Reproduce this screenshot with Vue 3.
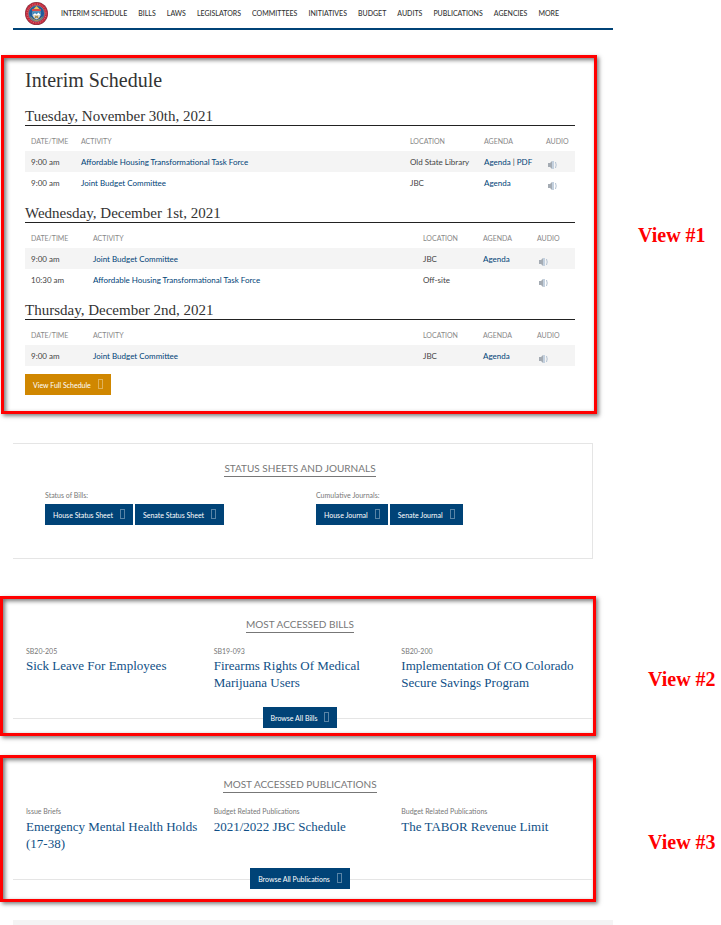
<script setup>
const navItems = [
	'Interim Schedule', 'Bills', 'Laws', 'Legislators', 'Committees', 'Initiatives',
	'Budget', 'Audits', 'Publications', 'Agencies', 'More',
];

const TASK_FORCE = 'Affordable Housing Transformational Task Force';
const JBC = 'Joint Budget Committee';

// wide: the agenda column has to hold both the agenda and the PDF link
const days = [
	{
		title: 'Tuesday, November 30th, 2021',
		wide: true,
		rows: [
			{ time: '9:00 am', activity: TASK_FORCE, location: 'Old State Library', agenda: true, pdf: true },
			{ time: '9:00 am', activity: JBC, location: 'JBC', agenda: true },
		],
	},
	{
		title: 'Wednesday, December 1st, 2021',
		rows: [
			{ time: '9:00 am', activity: JBC, location: 'JBC', agenda: true },
			{ time: '10:30 am', activity: TASK_FORCE, location: 'Off-site' },
		],
	},
	{
		title: 'Thursday, December 2nd, 2021',
		rows: [{ time: '9:00 am', activity: JBC, location: 'JBC', agenda: true }],
	},
];

const statusGroups = [
	{ label: 'Status of Bills:', links: ['House Status Sheet', 'Senate Status Sheet'] },
	{ label: 'Cumulative Journals:', links: ['House Journal', 'Senate Journal'] },
];

const listViews = [
	{
		id: 2,
		title: 'Most Accessed Bills',
		browse: 'Browse All Bills',
		items: [
			{ kind: 'SB20-205', name: 'Sick Leave For Employees' },
			{ kind: 'SB19-093', name: 'Firearms Rights Of Medical Marijuana Users' },
			{ kind: 'SB20-200', name: 'Implementation Of CO Colorado Secure Savings Program' },
		],
	},
	{
		id: 3,
		title: 'Most Accessed Publications',
		browse: 'Browse All Publications',
		items: [
			{ kind: 'Issue Briefs', name: 'Emergency Mental Health Holds (17-38)' },
			{ kind: 'Budget Related Publications', name: '2021/2022 JBC Schedule' },
			{ kind: 'Budget Related Publications', name: 'The TABOR Revenue Limit' },
		],
	},
];
</script>

<template>
	<div class="page">
		<header class="site-header">
			<a href="#" class="seal" aria-label="Home">
				<svg viewBox="0 0 46 46" width="23" height="23">
					<circle cx="23" cy="23" r="23" fill="#7b3b46" />
					<circle cx="23" cy="23" r="19" fill="none" stroke="#c4283c" stroke-width="6" />
					<circle cx="23" cy="23" r="19" fill="none" stroke="#d98a8a" stroke-width="2" stroke-dasharray="2 3" />
					<circle cx="23" cy="23" r="16" fill="#1f5c9c" stroke="#b9a58f" />
					<path d="M23 8l6 6H17z" fill="#e9c65a" />
					<path d="M14 14h18v4H14z" fill="#d94a4a" />
					<path d="M15 19h16v8q-2 6-8 8-6-2-8-8z" fill="#d9d6c8" />
					<path d="M15 19h16v6H15z" fill="#4388bd" />
					<path d="M16 26l4-4 3 3 4-4 4 5z" fill="#fff" />
					<path d="M19 32l7-4M20 28l7 4" stroke="#a88639" stroke-width="2" />
					<path d="M11 30q5 7 12 7t12-7" fill="none" stroke="#d6a646" stroke-width="2" />
				</svg>
			</a>
			<nav>
				<a v-for="item in navItems" :key="item" href="#">{{ item }}</a>
			</nav>
		</header>

		<section class="view view-1">
			<div class="frame schedule">
				<h1>Interim Schedule</h1>
				<template v-for="day in days" :key="day.title">
					<h2>{{ day.title }}</h2>
					<table :class="{ wide: day.wide }">
						<thead>
							<tr>
								<th class="time">Date/Time</th>
								<th>Activity</th>
								<th class="location">Location</th>
								<th class="agenda">Agenda</th>
								<th class="audio">Audio</th>
							</tr>
						</thead>
						<tbody>
							<tr v-for="(row, i) in day.rows" :key="i">
								<td>{{ row.time }}</td>
								<td><a href="#">{{ row.activity }}</a></td>
								<td>{{ row.location }}</td>
								<td>
									<a v-if="row.agenda" href="#">Agenda</a>
									<template v-if="row.pdf"> | <a href="#">PDF</a></template>
								</td>
								<td class="speaker">
									<svg viewBox="0 0 9 8" width="9" height="8">
										<path d="M0 2h2l2-2v8L2 6H0z" fill="#a4abb3" />
										<path d="M4 0h2v8H4z" fill="#c3d0de" />
										<path d="M7.5 1q1.4 3 0 6" fill="none" stroke="#b3c1d0" />
									</svg>
								</td>
							</tr>
						</tbody>
					</table>
				</template>
				<a href="#" class="button gold">View Full Schedule<i class="glyph"></i></a>
			</div>
			<p class="tag">View #1</p>
		</section>

		<section class="status-panel">
			<h3>Status Sheets and Journals</h3>
			<div class="groups">
				<div v-for="group in statusGroups" :key="group.label">
					<p class="kind">{{ group.label }}</p>
					<div class="buttons">
						<a v-for="link in group.links" :key="link" href="#" class="button">{{ link }}<i class="glyph"></i></a>
					</div>
				</div>
			</div>
		</section>

		<section v-for="view in listViews" :key="view.id" class="view" :class="`view-${view.id}`">
			<div class="frame list">
				<h3>{{ view.title }}</h3>
				<div class="items">
					<div v-for="item in view.items" :key="item.name">
						<p class="kind">{{ item.kind }}</p>
						<a href="#" class="name">{{ item.name }}</a>
					</div>
				</div>
				<div class="browse">
					<a href="#" class="button">{{ view.browse }}<i class="glyph"></i></a>
				</div>
			</div>
			<p class="tag">View #{{ view.id }}</p>
		</section>

		<footer></footer>
	</div>
</template>

<style>
body {
	margin: 0;
	background: #fff;
}
</style>

<style scoped>
.page {
	font-family: Lato, 'Open Sans', sans-serif;
	font-size: 8px;
	color: #444;
}
h1,
h2,
h3,
p {
	margin: 0;
	font-weight: normal;
}
a {
	color: #004377;
	text-decoration: none;
}
.site-header {
	display: flex;
	align-items: center;
	box-sizing: border-box;
	height: 30px;
	margin: 0 108px 25px 13px;
	padding: 0 12px 2px;
	border-bottom: 2px solid #004377;
}
.seal,
.seal svg {
	display: block;
}
nav {
	display: flex;
	gap: 11px;
	margin-left: 13px;
}
nav a {
	font-size: 7px;
	font-weight: 500;
	line-height: 10px;
	color: #333;
	text-transform: uppercase;
	white-space: nowrap;
}

.view {
	display: grid;
	grid-template-columns: minmax(0, 1fr) 125px;
	align-items: center;
}
.view-1 {
	grid-template-columns: minmax(0, 1fr) 124px;
	margin: 0 0 29px 1px;
}
.frame {
	border: 3px solid #f00;
	box-shadow: 2px 2px 4px rgba(0, 0, 0, 0.5), inset 2px 2px 4px rgba(0, 0, 0, 0.55);
}
.tag {
	padding: 26px 0 0 52px;
	font: bold 20px/24px 'Liberation Serif', serif;
	color: #f00;
	white-space: nowrap;
}
.view-1 .tag {
	padding: 0 0 0 41px;
}

.schedule {
	padding: 10px 19px 16px 21px;
}
h1,
h2,
.name {
	font-family: 'Liberation Serif', serif;
}
h1 {
	margin-bottom: 15px;
	font-size: 20px;
	line-height: 24px;
	color: #333;
}
h2 {
	margin-top: 11px;
	border-bottom: 1px solid #222;
	font-size: 15px;
	line-height: 18px;
	color: #333;
}
table {
	width: 100%;
	table-layout: fixed;
	border-collapse: collapse;
}
th,
td {
	padding: 0 0 0 6px;
	text-align: left;
	white-space: nowrap;
}
th {
	height: 21px;
	padding-top: 4px;
	font-size: 7px;
	font-weight: normal;
	line-height: 10px;
	color: #888;
	text-transform: uppercase;
}
td {
	height: 21px;
	line-height: 10px;
}
.time {
	width: 56px;
}
.location {
	width: 54px;
}
.agenda {
	width: 48px;
}
.audio {
	width: 38px;
}
.wide .time {
	width: 44px;
}
.wide .location {
	width: 68px;
}
.wide .agenda {
	width: 56px;
}
.wide .audio {
	width: 29px;
}
tbody tr:nth-child(odd) {
	background: #f4f4f4;
}
.speaker {
	padding: 6px 0 0 8px;
	height: 15px;
}
.speaker svg {
	display: block;
}

.button {
	display: inline-flex;
	align-items: center;
	height: 21px;
	padding: 0 8px;
	background: #004377;
	color: #fff;
	font-size: 7px;
	line-height: 10px;
	white-space: nowrap;
}
.gold {
	margin-top: 8px;
	background: #d08700;
}
.schedule .button {
	display: flex;
	width: fit-content;
}
.glyph {
	width: 3px;
	height: 8px;
	margin: 0 0 2px 7px;
	border: 1px solid rgba(255, 255, 255, 0.35);
}

h3 {
	width: fit-content;
	margin: 0 auto 13px;
	border-bottom: 1px solid #777;
	font-size: 10px;
	line-height: 16px;
	color: #777;
	text-transform: uppercase;
}
.kind {
	font-size: 7px;
	line-height: 10px;
	color: #777;
}
.status-panel {
	margin: 0 128px 37px 13px;
	padding: 16px 5px 33px 0;
	border: solid #e5e5e5;
	border-width: 1px 1px 1px 0;
}
.groups {
	display: grid;
	grid-template-columns: 1fr 1fr;
	padding-left: 32px;
}
.buttons {
	display: flex;
	gap: 2px;
	margin-top: 4px;
}

.list {
	padding: 17px 6px 5px 10px;
}
.view-2 {
	margin-bottom: 19px;
}
.view-3 {
	margin-bottom: 18px;
}
.view-3 .list {
	padding: 18px 6px 10px 10px;
}
.view-3 .name {
	margin-top: 2px;
}
.items {
	display: grid;
	grid-template-columns: repeat(3, 1fr);
	margin-right: -2px;
	padding-left: 13px;
}
.name {
	display: block;
	margin-top: 1px;
	padding-right: 12px;
	font-size: 13px;
	line-height: 17px;
	color: #0f4f86;
}
.browse {
	display: flex;
	justify-content: center;
	margin: 16px -6px 0 0;
	padding-right: 6px;
	background: linear-gradient(#e5e5e5, #e5e5e5) 0 11px / 100% 1px no-repeat;
}
footer {
	height: 5px;
	margin: 0 108px 0 13px;
	background: #f4f4f4;
}
</style>
